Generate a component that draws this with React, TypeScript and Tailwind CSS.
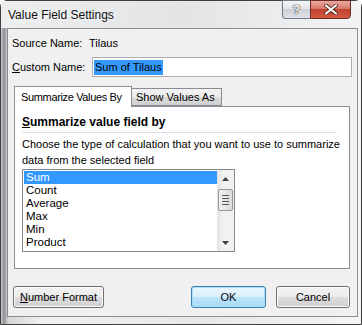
import React from "react";

const items = ["Sum", "Count", "Average", "Max", "Min", "Product"];

const WinButton: React.FC<{ label: React.ReactNode; width: string; primary?: boolean }> = ({
	label,
	width,
	primary,
}) => (
	<button
		className={
			"h-[22px] rounded-[3px] border text-[11px] text-black leading-none " +
			width +
			(primary
				? " border-[#3c7fb1] shadow-[inset_0_0_0_1px_#a7e0f8] bg-[linear-gradient(#eaf6fd_0%,#d9f0fc_50%,#bee6fd_50%,#a7d9f5_100%)]"
				: " border-[#707070] shadow-[inset_0_0_0_1px_#fbfbfb] bg-[linear-gradient(#f2f2f2_0%,#ebebeb_50%,#dddddd_50%,#cfcfcf_100%)]")
		}
	>
		{label}
	</button>
);

const App: React.FC = () => {
	return (
		<div className="w-[362px] h-[325px] overflow-hidden bg-white font-['Liberation_Sans',Arial,sans-serif] text-[11px] text-black">
			<div className="w-[362px] h-[325px] flex flex-col border border-[#3f3f3f] rounded-t-[7px] bg-[linear-gradient(to_right,#c9cbcd_0px,#8d8f92_3px,#d4d6d8_7px,#eef0f2_40px,#e6e8ea_200px,#f4f5f6_362px)]">
				{/* title bar */}
				<div className="h-[27px] flex items-start justify-between bg-[linear-gradient(to_right,#eceef0,#e2e4e6_50%,#f2f3f4)]">
					<div className="pl-[7px] pt-[7px] text-[12px] leading-[15px] text-[#111] [text-shadow:0_0_6px_#fff]">
						Value Field Settings
					</div>
					<div className="flex mr-[10px] -mt-px">
						<div className="w-[28px] h-[19px] border border-[#6f7c8a] border-r-0 rounded-bl-[4px] bg-[linear-gradient(#f5f6f7_0%,#e3e5e8_50%,#ccd0d5_50%,#dfe2e6_100%)] flex items-center justify-center">
							<span className="text-[13px] font-bold leading-none text-white [text-shadow:0_0_1px_#333,0_0_1px_#333,0_0_1px_#333]">?</span>
						</div>
						<div className="w-[41px] h-[19px] border border-[#6b2a22] rounded-br-[4px] bg-[linear-gradient(#eaa99e_0%,#d77b6c_45%,#c2412f_50%,#d65a44_100%)] flex items-center justify-center">
							<svg width="14" height="11" viewBox="0 0 14 11">
								<path d="M2 1.5 L12 9.5 M12 1.5 L2 9.5" stroke="#4a1f18" strokeWidth="3.6" strokeLinecap="square" />
								<path d="M2 1.5 L12 9.5 M12 1.5 L2 9.5" stroke="#fff" strokeWidth="2" strokeLinecap="square" />
							</svg>
						</div>
					</div>
				</div>

				{/* client area */}
				<div className="ml-[6px] mr-[3px] h-[289px] border border-[#8a8f96] bg-[#f0f0f0] flex flex-col">
					<div className="flex h-[13px] mt-[8px] pl-[4px] leading-[13px]">
						<span className="w-[77px]">Source Name:</span>
						<span>Tilaus</span>
					</div>

					<div className="flex items-center mt-[7px] pl-[4px] pr-[5px]">
						<span className="w-[80px]">
							<span className="underline">C</span>ustom Name:
						</span>
						<div className="flex-1 h-[20px] border border-[#abadb3] bg-white flex items-center pl-[1px]">
							<span className="bg-[#3399ff] text-black px-px leading-[15px]">Sum of Tilaus</span>
						</div>
					</div>

					{/* tabs */}
					<div className="mt-[9px] ml-[6px] mr-[7px] flex flex-col">
						<div className="flex items-end h-[20px] relative z-10">
							<div className="h-[21px] w-[118px] border border-[#898c95] border-b-0 bg-white flex items-center pl-[6px] -mb-px tracking-[-0.35px]">
								Summarize Values By
							</div>
							<div className="h-[18px] w-[90px] border border-[#898c95] border-l-0 bg-[linear-gradient(#f2f2f2_0%,#ebebeb_50%,#dddddd_50%,#cfcfcf_100%)] flex items-center pl-[4px]">
								Show Values As
							</div>
						</div>
						<div className="h-[163px] border border-[#898c95] bg-white px-[7px] pt-[8px]">
							<div className="font-bold text-[12px] leading-[14px]">
								<span className="underline">S</span>ummarize value field by
							</div>
							<div className="mt-[3px] h-px mr-[5px] bg-[#dde1e6]" />
							<div className="mt-[3px] leading-[16px]">
								Choose the type of calculation that you want to use to summarize
								<br />
								data from the selected field
							</div>
							<div className="mt-[1px] w-[213px] h-[83px] border border-[#828790] flex">
								<div className="flex-1 pt-px pl-px">
									{items.map((it, i) => (
										<div
											key={it}
											className={
												"h-[13px] leading-[13px] pl-[2px] text-[11.5px] " +
												(i === 0 ? "bg-[#3399ff] text-white" : "")
											}
										>
											{it}
										</div>
									))}
								</div>
								<div className="w-[17px] bg-[linear-gradient(to_right,#e3e3e3,#f3f3f3_40%,#f0f0f0)] flex flex-col items-center">
									<div className="h-[17px] flex items-center justify-center">
										<svg width="7" height="4" viewBox="0 0 7 4">
											<path d="M0 4 L3.5 0 L7 4 Z" fill="#404040" />
										</svg>
									</div>
									<div className="mt-[2px] w-[15px] h-[22px] rounded-[2px] border border-[#979797] bg-[linear-gradient(to_right,#f2f2f2,#dadada)] flex flex-col items-center justify-center gap-[2px]">
										<div className="w-[7px] h-px bg-[#555]" />
										<div className="w-[7px] h-px bg-[#555]" />
										<div className="w-[7px] h-px bg-[#555]" />
										<div className="w-[7px] h-px bg-[#555]" />
									</div>
									<div className="flex-1" />
									<div className="h-[17px] flex items-center justify-center">
										<svg width="7" height="4" viewBox="0 0 7 4">
											<path d="M0 0 L3.5 4 L7 0 Z" fill="#404040" />
										</svg>
									</div>
								</div>
							</div>
						</div>
					</div>

					{/* buttons */}
					<div className="mt-[17px] flex pl-[5px] pr-[7px]">
						<WinButton
							width="w-[91px]"
							label={
								<>
									<span className="underline">N</span>umber Format
								</>
							}
						/>
						<div className="flex-1" />
						<WinButton width="w-[75px]" label="OK" primary />
						<div className="w-[10px]" />
						<WinButton width="w-[74px]" label="Cancel" />
					</div>
				</div>
			</div>
		</div>
	);
};

export default App;
